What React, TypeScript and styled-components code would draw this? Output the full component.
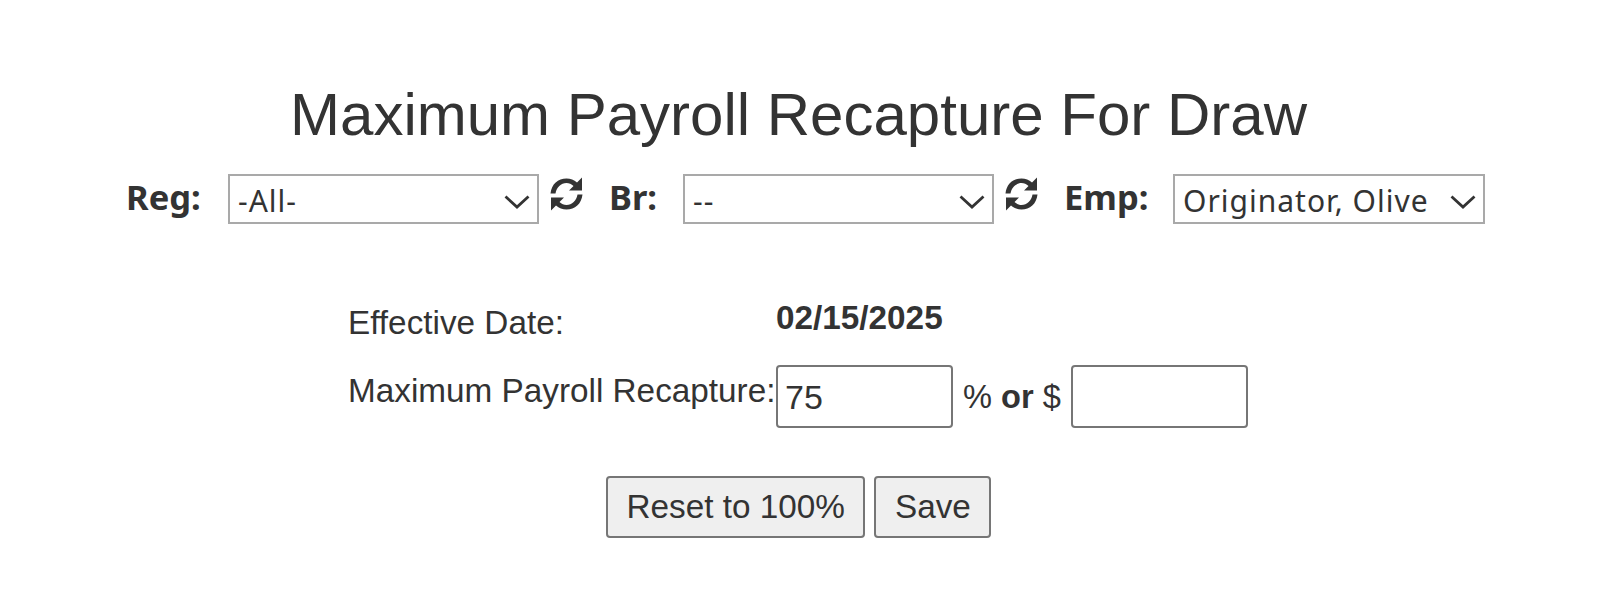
import React from 'react'
import styled, { createGlobalStyle } from 'styled-components'

const GlobalStyle = createGlobalStyle`
  html, body {
    margin: 0;
    padding: 0;
    background: #fff;
    color: #333;
    font-family: "Liberation Sans", Arial, sans-serif;
  }
`

const Page = styled.div`
  width: 1611px;
  height: 602px;
  overflow: hidden;
  padding-top: 79px;
  box-sizing: border-box;
`

const Title = styled.h1`
  margin: 0 0 0 -14px;
  font-size: 60px;
  line-height: 72px;
  font-weight: 400;
  text-align: center;
`

const FilterBar = styled.div`
  display: flex;
  align-items: flex-start;
  margin-top: 23px;
  padding-left: 126px;
  height: 50px;
`

const FilterLabel = styled.label<{ $width: number }>`
  width: ${props => props.$width}px;
  font-family: "Noto Sans", "Open Sans", sans-serif;
  font-weight: 700;
  font-size: 34.5px;
  line-height: 45px;
`

const SelectWrap = styled.span<{ $width: number }>`
  position: relative;
  display: block;
  width: ${props => props.$width}px;
  height: 50px;
`

const Select = styled.select`
  appearance: none;
  display: block;
  width: 100%;
  height: 100%;
  box-sizing: border-box;
  border: 2px solid #a9a9a9;
  border-radius: 0;
  background: #fff;
  color: #333;
  padding: 3px 4px 0 8px;
  font-family: "Noto Sans", "Open Sans", sans-serif;
  font-size: 30px;
  letter-spacing: 1px;
`

const Chevron = styled.svg`
  position: absolute;
  top: 21px;
  right: 9px;
  width: 26px;
  height: 14px;
  fill: none;
  stroke: #333;
  stroke-width: 2.8;
  pointer-events: none;
`

const RefreshButton = styled.span`
  display: flex;
  width: 70px;
  padding: 3px 0 0 11px;
  box-sizing: border-box;
`

const RefreshIcon = styled.svg`
  width: 33px;
  height: 34px;
  fill: #333;
`

const FormGrid = styled.div`
  display: grid;
  grid-template-columns: 428px auto;
  margin: 74px 0 0 348px;
`

const FieldLabel = styled.div<{ $top: number }>`
  font-size: 33.3px;
  line-height: 37px;
  padding-top: ${props => props.$top}px;
  white-space: nowrap;
`

const DateValue = styled.div`
  font-size: 33.3px;
  line-height: 37px;
  font-weight: 700;
  height: 66px;
  padding-top: 1px;
`

const AmountRow = styled.div`
  display: flex;
  align-items: center;
  gap: 10px;
  font-size: 32.6px;
`

const AmountInput = styled.input`
  width: 177px;
  height: 63px;
  box-sizing: border-box;
  border: 2px solid #767676;
  border-radius: 4px;
  padding: 2px 7px 0;
  background: #fff;
  color: #333;
  font-family: "Liberation Sans", Arial, sans-serif;
  font-size: 34px;
`

const Actions = styled.div`
  display: flex;
  gap: 9px;
  margin: 48px 0 0 606px;
`

const Button = styled.button`
  height: 62px;
  box-sizing: border-box;
  border: 2px solid #767676;
  border-radius: 4px;
  background: #efefef;
  color: #333;
  padding: 0 18.5px;
  font-family: "Liberation Sans", Arial, sans-serif;
  font-size: 33.3px;
`

const FilterSelect = ({ value, label, width = 311 }: { value: string, label: string, width?: number }) => (
  <SelectWrap $width={width}>
    <Select defaultValue={value}>
      <option value={value}>{label}</option>
    </Select>
    <Chevron viewBox="0 0 26 14"><path d="M1.5 1.5 L13 12 L24.5 1.5" /></Chevron>
  </SelectWrap>
)

const arrow = 'M0.5 16.5C1.5 7 8 1.5 16.5 1.5C20.5 1.5 24 3 27 5.5L32 0.5V13.5H19L23.5 9C21.5 7 19 6 16.5 6C11 6 6.5 10.5 5.5 16.5Z'

const Refresh = () => (
  <RefreshButton>
    <RefreshIcon viewBox="0 0 33 34">
      <path d={arrow} />
      <path d={arrow} transform="rotate(180 16.5 17)" />
    </RefreshIcon>
  </RefreshButton>
)

const App = () => (
  <Page>
    <GlobalStyle />
    <Title>Maximum Payroll Recapture For Draw</Title>
    <FilterBar>
      <FilterLabel $width={102}>Reg:</FilterLabel>
      <FilterSelect value="all" label="-All-" />
      <Refresh />
      <FilterLabel $width={74}>Br:</FilterLabel>
      <FilterSelect value="none" label="--" />
      <Refresh />
      <FilterLabel $width={109}>Emp:</FilterLabel>
      <FilterSelect value="olive" label="Originator, Olive" width={312} />
    </FilterBar>
    <FormGrid>
      <FieldLabel $top={6}>Effective Date:</FieldLabel>
      <DateValue>02/15/2025</DateValue>
      <FieldLabel $top={7}>Maximum Payroll Recapture:</FieldLabel>
      <AmountRow>
        <AmountInput defaultValue="75" />
        <span>% <b>or</b> $</span>
        <AmountInput />
      </AmountRow>
    </FormGrid>
    <Actions>
      <Button>Reset to 100%</Button>
      <Button>Save</Button>
    </Actions>
  </Page>
)

export default App
